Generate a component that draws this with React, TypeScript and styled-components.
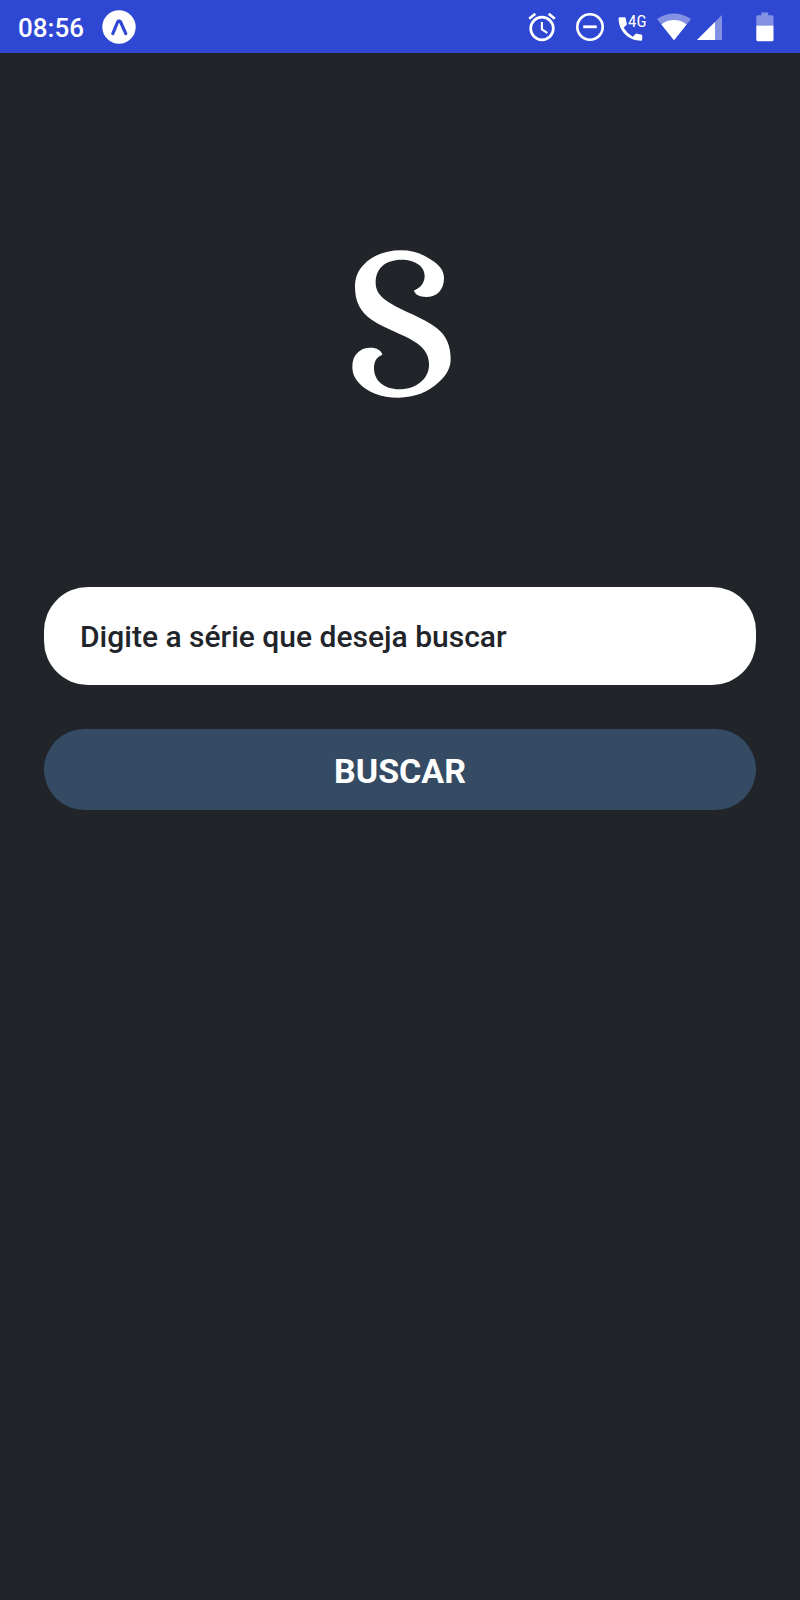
import React from "react";
import styled, { createGlobalStyle } from "styled-components";

const GlobalStyle = createGlobalStyle`
  *, *::before, *::after { box-sizing: border-box; }
  body {
    margin: 0;
    background: #212429;
    font-family: Roboto, "Liberation Sans", sans-serif;
  }
`;

const Screen = styled.div`
  min-height: 100vh;
  display: flex;
  flex-direction: column;
  background: #212429;
`;

const StatusBar = styled.header`
  display: flex;
  align-items: center;
  justify-content: space-between;
  height: 53px;
  padding: 0 26px 0 18px;
  background: #2f48d3;
  color: #fff;
`;

const StatusGroup = styled.div<{ $gap: number }>`
  display: flex;
  align-items: center;
  gap: ${({ $gap }) => $gap}px;
`;

const Clock = styled.time`
  font-size: 26px;
  font-weight: 500;
  line-height: 32px;
  padding-top: 2px;
`;

const Icon = styled.svg`
  display: block;
  flex: none;
`;

const NetworkLabel = styled.text`
  font-family: "Roboto Condensed", Roboto, sans-serif;
  font-size: 17px;
  fill: #fff;
`;

const Main = styled.main`
  display: flex;
  flex-direction: column;
  padding: 0 44px;
`;

const LogoArea = styled.div`
  display: flex;
  justify-content: center;
  padding: 197px 0 189px 2px;
`;

const SearchForm = styled.form`
  display: flex;
  flex-direction: column;
  gap: 44px;
`;

const SearchInput = styled.input`
  width: 100%;
  height: 98px;
  padding: 0 36px;
  border: 0;
  border-radius: 44px;
  outline: none;
  background: #fff;
  color: #212429;
  font-family: inherit;
  font-size: 30px;
  font-weight: 500;

  &::placeholder {
    color: #212429;
    opacity: 1;
  }
`;

const SearchButton = styled.button`
  width: 100%;
  height: 81px;
  padding: 3px 0 0;
  border: 0;
  border-radius: 41px;
  background: #344b63;
  color: #fff;
  font-family: inherit;
  font-size: 34px;
  font-weight: 700;
  cursor: pointer;
`;

const ExpoIcon = () => (
  <Icon width="34" height="34" viewBox="0 0 34 34" aria-hidden="true">
    <circle cx="17" cy="17" r="16.7" fill="#fff" />
    <path
      d="M10.8 23.6 L15.6 12 Q17 9.6 18.6 12 L23.8 23.6"
      fill="none"
      stroke="#2f48d3"
      strokeWidth="3.2"
      strokeLinecap="round"
      strokeLinejoin="round"
    />
  </Icon>
);

const AlarmIcon = () => (
  <Icon width="28" height="30" viewBox="0 0 28 30" fill="none" stroke="#fff" aria-hidden="true">
    <circle cx="14" cy="16.5" r="11.3" strokeWidth="2.7" />
    <path d="M1.2 6.8 L7.3 1.8 M20.7 1.8 L26.8 6.8" strokeWidth="2.7" />
    <path d="M13.9 10 V17.4 L19.3 20.8" strokeWidth="2.1" />
  </Icon>
);

const DoNotDisturbIcon = () => (
  <Icon width="28" height="28" viewBox="0 0 28 28" fill="none" stroke="#fff" aria-hidden="true">
    <circle cx="14" cy="14" r="12.7" strokeWidth="2.6" />
    <path d="M7.2 13.8 H20.8" strokeWidth="2.8" />
  </Icon>
);

const CallIcon = () => (
  <Icon width="33" height="32" viewBox="0 -1 33 32" role="img" aria-label="4G">
    <path
      d="M1.8 5.3 H6.6 Q7.7 5.3 7.8 6.4 Q8 9.1 8.8 11.4 Q9 12.4 8.4 13.1 L5.6 15.8 Q9 21.4 14.8 24.8 L17.5 22 Q18.2 21.4 19.2 21.7 Q21.5 22.4 23 22.5 Q24.2 22.6 24.2 23.8 V27.4 Q24.2 28.7 23 28.7 C10.5 28.7 .6 18.8 .6 6.5 Q.6 5.3 1.8 5.3 Z"
      fill="#fff"
    />
    <NetworkLabel x="10" y="15">4G</NetworkLabel>
  </Icon>
);

const WifiIcon = () => (
  <Icon width="34" height="28" viewBox="0 0 34 28" fill="#fff" aria-hidden="true">
    <path d="M17 27.3 L0 6.1 C9.5 -1.5 24.5 -1.5 34 6.1 Z" opacity=".4" />
    <path d="M17 27.3 L4.4 11.5 C11.5 5.6 22.5 5.6 29.6 11.5 Z" />
  </Icon>
);

const SignalIcon = () => (
  <Icon width="25" height="26" viewBox="0 0 25 26" fill="#fff" aria-hidden="true">
    <path d="M0 26 L25 1 V26 Z" opacity=".4" />
    <path d="M0 26 L18 8 V26 Z" />
  </Icon>
);

const BatteryIcon = () => (
  <Icon width="18" height="30" viewBox="0 0 18 30" fill="#fff" aria-hidden="true">
    <path d="M5.3 .5 H12.2 V3.3 H16 Q17.5 3.3 17.5 4.8 V13.5 H.3 V4.8 Q.3 3.3 1.8 3.3 H5.3 Z" opacity=".4" />
    <path d="M.3 13.5 H17.5 V27.8 Q17.5 29.3 16 29.3 H1.8 Q.3 29.3 .3 27.8 Z" />
  </Icon>
);

const Logo = () => (
  <Icon width="99" height="148" viewBox="65 60 297 444" role="img" aria-label="Logo">
    <path
      d="M251 181 C263 178 283 163 283 138 C283 110 256 89 214 89 C164 89 136 116 136 158 C136 198 170 218 246 253 C275 267 300 279 320 295 C348 317 361 348 361 388 C361 416 347 437 325 457 C294 487 251 503 205 503 C150 503 111 485 88 461 C73 445 66 430 66 410 C66 375 88 353 120 353 C140 353 153 361 156 374 C140 381 131 392 131 415 C131 451 160 478 207 478 C258 478 296 446 296 405 C296 377 284 357 260 340 C244 328 228 321 206 311 C175 297 148 286 125 270 C88 245 74 212 74 170 C74 142 83 121 100 104 C127 75 168 61 212 61 C242 61 268 68 290 82 C325 101 341 120 341 144 C341 180 320 201 287 201 C268 201 254 195 251 181 Z"
      fill="#fff"
    />
  </Icon>
);

export default function App() {
  return (
    <>
      <GlobalStyle />
      <Screen>
        <StatusBar>
          <StatusGroup $gap={18}>
            <Clock>08:56</Clock>
            <ExpoIcon />
          </StatusGroup>
          <StatusGroup $gap={34}>
            <StatusGroup $gap={14}>
              <StatusGroup $gap={20}>
                <AlarmIcon />
                <DoNotDisturbIcon />
              </StatusGroup>
              <StatusGroup $gap={6}>
                <CallIcon />
                <WifiIcon />
                <SignalIcon />
              </StatusGroup>
            </StatusGroup>
            <BatteryIcon />
          </StatusGroup>
        </StatusBar>
        <Main>
          <LogoArea>
            <Logo />
          </LogoArea>
          <SearchForm onSubmit={(event: React.FormEvent) => event.preventDefault()}>
            <SearchInput
              type="text"
              aria-label="Digite a série que deseja buscar"
              placeholder="Digite a série que deseja buscar"
            />
            <SearchButton type="submit">BUSCAR</SearchButton>
          </SearchForm>
        </Main>
      </Screen>
    </>
  );
}
